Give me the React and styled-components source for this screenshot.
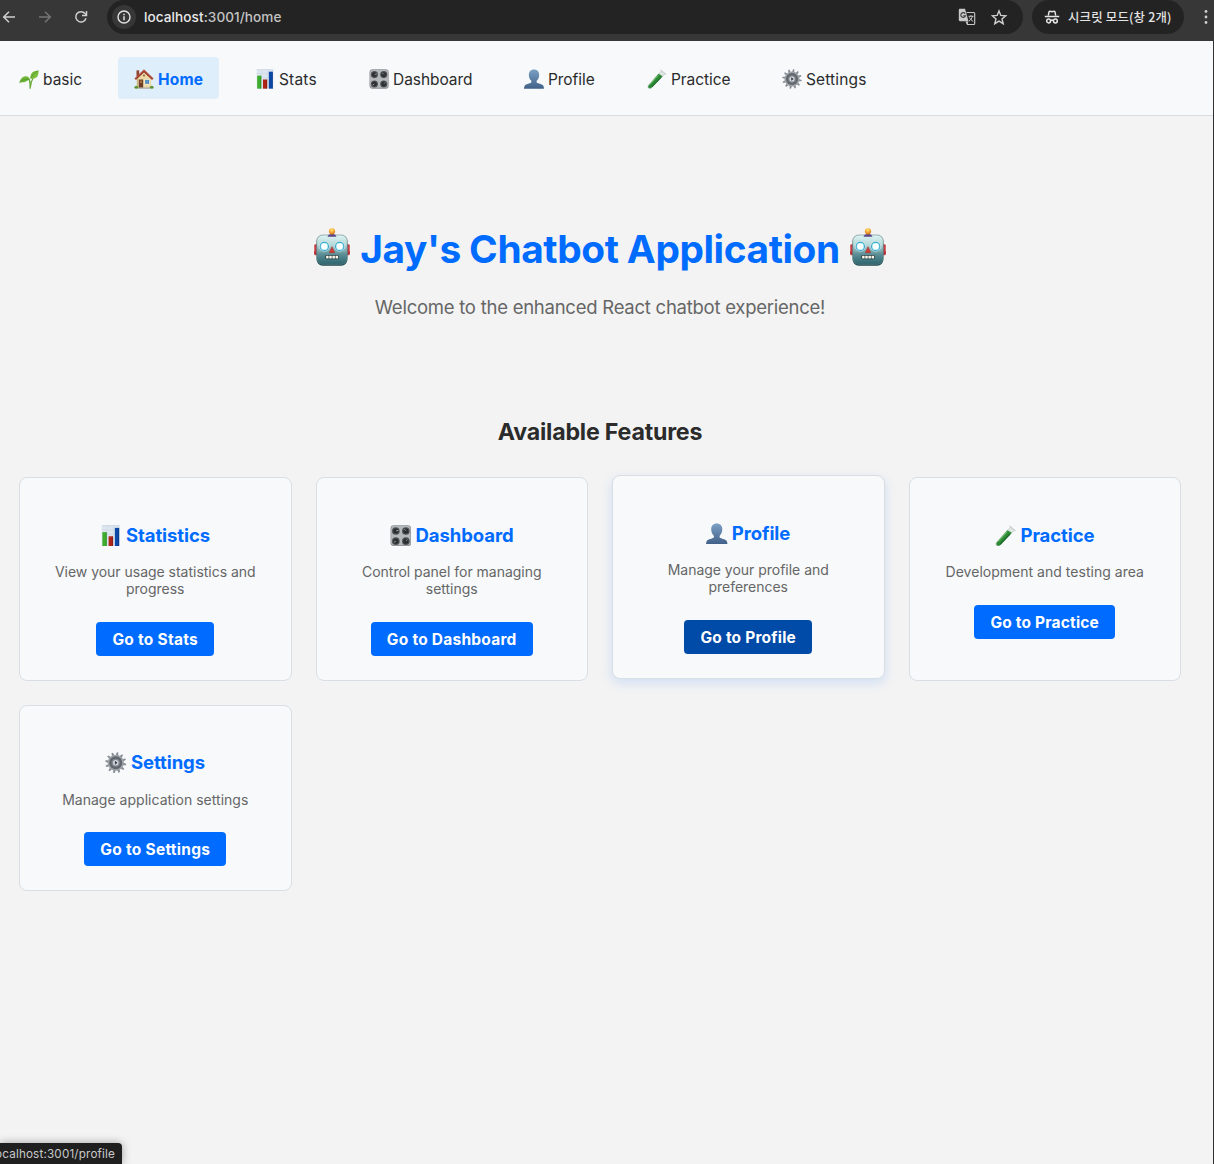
import React from "react";
import styled, { createGlobalStyle } from "styled-components";

const SANS = `Inter, "Noto Sans CJK KR", sans-serif`;

const GlobalStyle = createGlobalStyle`
  *, *::before, *::after { box-sizing: border-box; }
  body { margin: 0; background: #f3f3f3; font-family: ${SANS}; }
  h1, h2, h3, p { margin: 0; }
`;

/* ---------- browser chrome ---------- */

const Page = styled.div`
  position: relative;
  width: 1214px;
  height: 1164px;
  overflow: hidden;
  background: #f3f3f3;
  display: flex;
  flex-direction: column;
`;

const BrowserBar = styled.header`
  flex: none;
  display: flex;
  align-items: center;
  height: 41px;
  padding: 0 0 7px 2px;
  background: #373737;
`;

const HistoryButtons = styled.div`
  display: flex;
  gap: 22px;
  margin-right: 19px;
`;

const AddressBar = styled.div`
  display: flex;
  align-items: center;
  width: 916px;
  height: 34px;
  padding: 0 15px 0 5px;
  border-radius: 17px;
  background: #232323;
`;

const SiteInfo = styled.span`
  display: grid;
  place-items: center;
  width: 24px;
  height: 24px;
  margin-right: 8px;
  border-radius: 50%;
  background: #373737;
`;

const Url = styled.span`
  flex: 1;
  font-size: 13.6px;
  font-weight: 500;
  line-height: 18px;
  letter-spacing: 0.06px;
  color: #c3c3c3;
`;

const UrlHost = styled.span`
  color: #e9e9e9;
`;

const AddressActions = styled.div`
  display: flex;
  align-items: center;
  gap: 15px;
`;

const IncognitoChip = styled.div`
  display: flex;
  align-items: center;
  gap: 8px;
  width: 152px;
  height: 34px;
  margin: 0 15px 0 9px;
  padding-left: 12px;
  border-radius: 17px;
  background: #232323;
  color: #e4e4e4;
  font-family: "Noto Sans CJK KR", sans-serif;
  font-size: 12.4px;
  font-weight: 500;
  line-height: 18px;
  letter-spacing: 0.2px;
  white-space: nowrap;
`;

const Icon = styled.svg`
  display: block;
  flex: none;
  width: ${(p) => p.$w || 14}px;
  height: ${(p) => p.$h || p.$w || 14}px;
  color: ${(p) => p.$color || "#cfcfcf"};
`;

const WindowEdge = styled.div`
  position: absolute;
  top: 41px;
  right: 0;
  bottom: 0;
  width: 1px;
  background: #303030;
`;

const StatusBubble = styled.div`
  position: absolute;
  left: 0;
  bottom: 0;
  display: flex;
  justify-content: flex-end;
  width: 122px;
  height: 21px;
  padding-right: 7px;
  border-top-right-radius: 4px;
  background: #1f1f1f;
  box-shadow: 0 0 8px rgba(0, 0, 0, 0.35);
  color: #c9c9c9;
  font-size: 11.7px;
  line-height: 22.5px;
  letter-spacing: 0.16px;
  white-space: nowrap;
`;

/* ---------- application ---------- */

const NavBar = styled.nav`
  flex: none;
  display: flex;
  align-items: flex-start;
  gap: 20px;
  height: 75px;
  padding: 16px 0 0 3px;
  border-bottom: 1px solid #d9dde1;
  background: #f7f9fb;
`;

const NavItem = styled.a`
  display: flex;
  align-items: center;
  gap: 4px;
  width: ${(p) => p.$width}px;
  height: 42px;
  padding: 2px 0 0 16px;
  border-radius: 4px;
  background: ${(p) => (p.$active ? "#deeefb" : "transparent")};
  color: ${(p) => (p.$active ? "#006bff" : "#2b2b2b")};
  font-size: 15.5px;
  font-weight: ${(p) => (p.$active ? 700 : 400)};
  letter-spacing: ${(p) => p.$track}px;
  line-height: 20px;
  white-space: nowrap;
`;

const NavLabel = styled.span`
  padding-top: 2px;
`;

const Main = styled.main`
  padding: 109px 33px 0 19px;
  text-align: center;
`;

const Title = styled.h1`
  display: flex;
  justify-content: center;
  align-items: center;
  gap: 9px;
  height: 48px;
  color: #006bff;
  font-size: 38.8px;
  font-weight: 700;
  line-height: 48px;
  letter-spacing: -0.4px;
  word-spacing: -0.4px;
`;

const RobotIcon = styled(Icon)`
  margin-bottom: 4px;
`;

const Subtitle = styled.p`
  margin-top: 22px;
  color: #666;
  font-size: 18.5px;
  line-height: 24px;
  letter-spacing: -0.25px;
`;

const SectionTitle = styled.h2`
  margin: 98px 0 30px;
  color: #2b2b2b;
  font-size: 23.2px;
  font-weight: 700;
  line-height: 30px;
  letter-spacing: -0.2px;
`;

const FeatureGrid = styled.section`
  display: grid;
  grid-template-columns: repeat(4, 1fr);
  gap: 24px;
`;

const Card = styled.article`
  display: flex;
  flex-direction: column;
  align-items: center;
  padding: ${(p) => (p.$tight ? 44 : 45)}px 24px 24px;
  border: 1px solid #d9dee4;
  border-radius: 8px;
  background: #f7f9fb;
  transform: ${(p) => (p.$hovered ? "translateY(-2px)" : "none")};
  box-shadow: ${(p) => (p.$hovered ? "0 4px 12px rgba(0, 107, 255, 0.15)" : "none")};
`;

const CardTitle = styled.h3`
  display: flex;
  align-items: center;
  gap: 4px;
  color: #006bff;
  font-size: 18.5px;
  font-weight: 700;
  line-height: 24px;
  letter-spacing: -0.07px;

  svg {
    margin-top: 1px;
  }
`;

const CardText = styled.p`
  margin-top: ${(p) => (p.$tight ? 17 : 16)}px;
  color: #666;
  font-size: 14px;
  line-height: 17px;
  letter-spacing: ${(p) => p.$track || -0.02}px;
`;

const CardButton = styled.button`
  height: 34px;
  margin-top: ${(p) => (p.$tight ? 24 : 25)}px;
  padding: 2px 16px 0;
  border: 0;
  border-radius: 4px;
  background: ${(p) => (p.$hovered ? "#004aa8" : "#006bff")};
  color: #fff;
  font-family: ${SANS};
  font-size: 15.5px;
  font-weight: 700;
  line-height: 32px;
  letter-spacing: ${(p) => p.$track}px;
  white-space: nowrap;
`;

/* ---------- pictograms ---------- */

const Sprout = ({ size }) => (
  <Icon $w={size} viewBox="0 0 24 24">
    <path d="M13.400 23.600c.1-4.200-.1-7.600-1-10.800M13.600 22c.2-4 1-7.600 3.400-11.200" fill="none" stroke="#69a935" strokeWidth="1.600" />
    <path d="M.5 16.800C1.200 12.200 4.200 9 8 8.800c2.800 0 4.600 1.600 5.200 4.200-3.600.2-4.200 2.600-7.200 2.800-2.200 0-3.600 0-5.500 1Z" fill="#6fb536" />
    <path d="M1 16.300c3.200-3.600 7-4.600 11.600-3.600" fill="none" stroke="#4c8a28" strokeWidth=".8" />
    <path d="M13.800 11.800c-.6-4.400 1.200-8 4.600-9.200 2-.6 3.600-.2 5-1.200.4 4-.6 7.600-3.200 9.200-2 1.200-3.600.6-6.400 1.200Z" fill="#78bd3b" />
    <path d="M14.300 11.300c1.600-4.200 4.400-7 8.600-9.300" fill="none" stroke="#4c8a28" strokeWidth=".8" />
  </Icon>
);

const House = ({ size }) => (
  <Icon $w={size} viewBox="0 0 24 24">
    <rect x="3" y="1.600" width="3.200" height="7" fill="#8f4331" />
    <path d="M3.400 11.500 12 3.500l8.600 8V22.500H3.400Z" fill="#ecd9a6" />
    <path d="M3.400 11.500h2v11h-2z" fill="#cdb582" />
    <path d="M12 .6 23.300 11.400l-1.600 1.800L12 4.200l-9.700 9L.7 11.400Z" fill="#9a3a2b" />
    <path d="M12 .6 23.300 11.400l-.6.700L12 2 1.300 12.100l-.6-.7Z" fill="#c25c49" />
    <circle cx="12" cy="7.800" r="1.200" fill="#8a5a35" />
    <rect x="5.800" y="12.600" width="5.200" height="9.900" fill="#6d3f29" />
    <rect x="7" y="13.800" width="2.800" height="3" fill="#a6683f" />
    <rect x="12.700" y="12.300" width="6.200" height="6.300" fill="#fff8e6" />
    <rect x="13.400" y="13" width="4.800" height="4.900" fill="#4483b5" />
    <path d="M15.800 13v4.900" stroke="#c6dbe8" strokeWidth=".5" />
    <rect x="4.600" y="22.200" width="15" height="1.400" fill="#a9a094" />
    <ellipse cx="2.800" cy="22" rx="2.200" ry="1.800" fill="#5d9334" />
    <ellipse cx="21.300" cy="22" rx="2.200" ry="1.800" fill="#5d9334" />
  </Icon>
);

const BarChart = ({ size }) => (
  <Icon $w={size} viewBox="0 0 24 24">
    <path d="M2 .4h20v23.200H2Z" fill="#dde6f0" />
    <path d="M2 5.500h20M2 10.500h20M2 15.500h20M7.700.4v23M15.200.4v23" stroke="#c8d5e3" strokeWidth=".6" />
    <path d="M2 .7h20" stroke="#c4cfdb" strokeWidth=".7" />
    <rect x="2.600" y="8" width="5" height="15.600" fill="#3fae2f" />
    <rect x="9.600" y="12.600" width="5" height="11" fill="#ae2417" />
    <rect x="16.600" y="3.200" width="4.800" height="20.400" fill="#0b48a8" />
    <path d="M7 8v15.600M14 12.600v11M20.800 3.200v20.400" stroke="#000" strokeOpacity=".2" strokeWidth="1" />
  </Icon>
);

const Knobs = ({ size }) => (
  <Icon $w={size} viewBox="0 0 24 24">
    <rect x=".6" y=".4" width="23" height="23.200" rx="3.600" fill="#8b8e91" />
    <rect x="1.300" y="1" width="21.600" height="21.600" rx="3" fill="#b4b8bb" />
    {[[6.500, 6.700], [17.700, 6.700], [6.500, 18], [17.700, 18]].map(([x, y]) => (
      <g key={`${x}-${y}`}>
        <circle cx={x} cy={y} r="4.300" fill="#505356" />
        <circle cx={x} cy={y} r="2.900" fill="#2b2e30" />
      </g>
    ))}
    <path d="M6.800 6.500l2.600-.5M17.800 6.500l-1.800-1.800M6.500 18l-2.100 1.300M17.900 17.700l1.600-1.600" stroke="#b5b9bc" strokeWidth=".9" />
  </Icon>
);

const Person = ({ size }) => (
  <Icon $w={size} viewBox="0 0 24 24">
    <defs>
      <linearGradient id="person" x1="0" y1="0" x2="0" y2="1">
        <stop offset="0" stopColor="#7ba0c6" />
        <stop offset="1" stopColor="#416087" />
      </linearGradient>
    </defs>
    <path
      fill="url(#person)"
      d="M12 .5c3.900 0 6.200 2.600 6.200 6.300 0 2.900-1.100 5.700-2.700 7.100-.5.500-.6 2 .1 2.600 1.200 1 6 1.400 7.400 3.300.7 1 .9 2.500.9 3.900H.1c0-1.400.2-2.900.9-3.900 1.400-1.900 6.200-2.300 7.400-3.300.7-.6.600-2.100.1-2.600-1.600-1.400-2.700-4.200-2.700-7.100C5.800 3.100 8.100.5 12 .5Z"
    />
  </Icon>
);

const TestTube = ({ size }) => (
  <Icon $w={size} viewBox="0 0 24 24">
    <path d="m17.400 2.200 4.200 3.600L6 22.400c-1.200 1.300-3 1.500-4.100.5s-1-2.900.2-4.200Z" fill="#dfe6e3" stroke="#a9b5b0" strokeWidth=".5" />
    <path d="m13.800 5.800 5 2.800L5.700 22.300c-1.100 1.100-2.600 1.300-3.600.4s-.8-2.500.3-3.600Z" fill="#2d8a36" />
    <path d="M13.400 7.700 3.600 18.400" stroke="#86cf7d" strokeWidth="1" strokeLinecap="round" />
    <path d="M16.400 10.600 6 21.300" stroke="#176321" strokeWidth="1.200" strokeLinecap="round" />
    <path d="m16.600 1.400 5.800 4.900" stroke="#c9d1cf" strokeWidth="1.400" strokeLinecap="round" />
  </Icon>
);

const Gear = ({ size }) => (
  <Icon $w={size} viewBox="0 0 24 24">
    {[0, 30, 60, 90, 120, 150].map((a) => (
      <path key={a} d="M11.200.3h1.600l.7 4v15.400l-.7 4h-1.600l-.7-4V4.300Z" fill="#868c93" transform={`rotate(${a + 10} 12 12)`} />
    ))}
    <circle cx="12" cy="12" r="9" fill="#9da3a9" />
    <circle cx="12" cy="12" r="7.300" fill="#62676d" />
    <circle cx="12" cy="12" r="4.600" fill="#82888f" />
    <circle cx="12" cy="12" r="3.100" fill="#d5dae0" />
    <path d="M11.400 10.400 13.600 12l-2.200 1.600Z" fill="#2b3036" stroke="#2b3036" strokeWidth=".6" />
  </Icon>
);

const Robot = () => (
  <RobotIcon $w={38} viewBox="0 0 38 38">
    <defs>
      <linearGradient id="robotHead" x1="0" y1="0" x2="0" y2="1">
        <stop offset="0" stopColor="#dff5f3" />
        <stop offset=".35" stopColor="#b4d7d8" />
        <stop offset=".65" stopColor="#5d9097" />
        <stop offset="1" stopColor="#2d646d" />
      </linearGradient>
      <radialGradient id="robotBall" cx=".45" cy=".3" r=".7">
        <stop offset="0" stopColor="#ffe77a" />
        <stop offset=".6" stopColor="#f3a32c" />
        <stop offset="1" stopColor="#c96a18" />
      </radialGradient>
    </defs>
    <rect x="1" y="16.300" width="5" height="11" rx="1.800" fill="#b8323a" />
    <rect x="32" y="16.300" width="5" height="11" rx="1.800" fill="#b8323a" />
    <path d="M1.700 17.500v6M36.300 17.500v6" stroke="#e27c7a" strokeWidth="1" />
    <rect x="3.700" y="7.300" width="30.600" height="30.400" rx="6" fill="#1c4850" />
    <rect x="3.700" y="7" width="30.600" height="29.300" rx="6" fill="url(#robotHead)" stroke="#69888a" strokeWidth=".6" />
    <path d="M14.600 8.800c0-1.900 1.800-2.900 4.400-2.900s4.400 1 4.400 2.900Z" fill="#5d4585" />
    <circle cx="19" cy="3.300" r="3.100" fill="url(#robotBall)" />
    {[11.300, 26.700].map((x) => (
      <g key={x}>
        <circle cx={x} cy="18.400" r="5.200" fill="#d3eef2" />
        <circle cx={x} cy="18.400" r="4.600" fill="#1f8fb4" />
        <circle cx={x} cy="18.400" r="3.900" fill="#86e4f3" />
        <circle cx={x} cy="18.400" r="3.100" fill="#fff" />
      </g>
    ))}
    <path d="m19 18.800 2.700 5.900h-5.400Z" fill="#d43c33" stroke="#9b2a28" strokeWidth=".5" strokeLinejoin="round" />
    <rect x="12.300" y="27" width="13.400" height="4.200" rx="1.300" fill="#1f3d42" />
    <path d="M13.100 29.100h12" stroke="#fff8ea" strokeWidth="2.800" strokeDasharray="2.500 .65" />
  </RobotIcon>
);

/* ---------- data ---------- */

const NAV = [
  { label: "basic", Pic: Sprout, width: 95, track: 0 },
  { label: "Home", Pic: House, width: 101, track: 0.2, active: true },
  { label: "Stats", Pic: BarChart, width: 94, track: 0.18 },
  { label: "Dashboard", Pic: Knobs, width: 135, track: -0.06 },
  { label: "Profile", Pic: Person, width: 103, track: -0.06 },
  { label: "Practice", Pic: TestTube, width: 115, track: -0.08 },
  { label: "Settings", Pic: Gear, width: 117, track: 0.14 },
];

const FEATURES = [
  { title: "Statistics", Pic: BarChart, text: "View your usage statistics and progress", action: "Go to Stats", track: 0.27 },
  { title: "Dashboard", Pic: Knobs, text: "Control panel for managing settings", action: "Go to Dashboard", track: 0.24 },
  { title: "Profile", Pic: Person, text: "Manage your profile and preferences", action: "Go to Profile", track: 0.2, hovered: true },
  { title: "Practice", Pic: TestTube, text: "Development and testing area", action: "Go to Practice", track: 0.18, textTrack: 0.02 },
  { title: "Settings", Pic: Gear, text: "Manage application settings", action: "Go to Settings", track: 0.27, textTrack: 0.02, tight: true },
];

export default function App() {
  return (
    <Page>
      <GlobalStyle />
      <BrowserBar>
        <HistoryButtons>
          <Icon viewBox="0 0 14 14">
            <path d="M13 7H1.800M7 1.700 1.700 7 7 12.300" fill="none" stroke="currentColor" strokeWidth="1.500" />
          </Icon>
          <Icon viewBox="0 0 14 14" $color="#757575">
            <path d="M1 7h11.200M7 1.700 12.300 7 7 12.300" fill="none" stroke="currentColor" strokeWidth="1.500" />
          </Icon>
          <Icon viewBox="0 0 14 14">
            <path d="M12 8.300A5.200 5.200 0 1 1 11 3.500l1.600 1.700" fill="none" stroke="currentColor" strokeWidth="1.500" />
            <path d="M12.500 1v4.500H8" fill="none" stroke="currentColor" strokeWidth="1.500" />
          </Icon>
        </HistoryButtons>
        <AddressBar>
          <SiteInfo>
            <Icon viewBox="0 0 14 14" $color="#e3e3e3">
              <circle cx="7" cy="7" r="6" fill="none" stroke="currentColor" strokeWidth="1.400" />
              <path d="M7 6.200v4M7 3.700v1.500" stroke="currentColor" strokeWidth="1.500" />
            </Icon>
          </SiteInfo>
          <Url>
            <UrlHost>localhost</UrlHost>:3001/home
          </Url>
          <AddressActions>
            <Icon $w={18} viewBox="0 0 18 18" $color="#c9c9c9">
              <path d="M8.500 4.500h7.200c.6 0 1 .4 1 1v10c0 .600-.4 1-1 1H9.500L8 13.500" fill="none" stroke="currentColor" strokeWidth="1.100" />
              <path d="M2 .8h5l3.500 12.400H2c-.7 0-1.200-.5-1.200-1.200V2C.8 1.300 1.300.8 2 .8Z" fill="currentColor" />
              <path d="M7.200 5.600A2.400 2.400 0 1 0 7.500 7.800H5.300" fill="none" stroke="#3a3a3a" strokeWidth="1.100" />
              <path d="M10.500 8.300h5M13 7.200v1.100M14.500 8.300c-.5 2-1.800 3.600-3.500 4.700M11.500 9.500c.7 1.500 2 2.900 3.700 3.900M9.800 13.300l-.6 3" fill="none" stroke="currentColor" strokeWidth="1" />
            </Icon>
            <Icon $w={17} viewBox="0 0 17 17">
              <path d="m8 1.900 1.800 4.500 4.900.4-3.700 3.100 1.200 4.800L8 12.100l-4.200 2.600L5 9.900 1.300 6.800l4.900-.4Z" fill="none" stroke="currentColor" strokeWidth="1.400" />
            </Icon>
          </AddressActions>
        </AddressBar>
        <IncognitoChip>
          <Icon $w={16} viewBox="0 0 16 16" $color="#e4e4e4">
            <path d="M4.300 6.700 5 3c.1-.6.600-.9 1.200-.7l1.800.4 1.800-.4c.6-.2 1.100.1 1.200.7l.7 3.700" fill="none" stroke="currentColor" strokeWidth="1.500" />
            <path d="M.8 7.400h14.400M6.500 11.700c.9-.7 2.100-.7 3 0" fill="none" stroke="currentColor" strokeWidth="1.500" />
            <circle cx="4.600" cy="12" r="1.900" fill="none" stroke="currentColor" strokeWidth="1.500" />
            <circle cx="11.400" cy="12" r="1.900" fill="none" stroke="currentColor" strokeWidth="1.500" />
          </Icon>
          시크릿 모드(창 2개)
        </IncognitoChip>
        <Icon viewBox="0 0 14 14">
          <circle cx="7" cy="1.500" r="1.400" fill="currentColor" />
          <circle cx="7" cy="7" r="1.400" fill="currentColor" />
          <circle cx="7" cy="12.500" r="1.400" fill="currentColor" />
        </Icon>
      </BrowserBar>

      <NavBar>
        {NAV.map(({ label, Pic, width, track, active }) => (
          <NavItem key={label} $width={width} $track={track} $active={active}>
            <Pic size={20} />
            <NavLabel>{label}</NavLabel>
          </NavItem>
        ))}
      </NavBar>

      <Main>
        <Title>
          <Robot />
          Jay's Chatbot Application
          <Robot />
        </Title>
        <Subtitle>Welcome to the enhanced React chatbot experience!</Subtitle>
        <SectionTitle>Available Features</SectionTitle>
        <FeatureGrid>
          {FEATURES.map(({ title, Pic, text, action, track, textTrack, hovered, tight }) => (
            <Card key={title} $hovered={hovered} $tight={tight}>
              <CardTitle>
                <Pic size={21.5} />
                {title}
              </CardTitle>
              <CardText $track={textTrack} $tight={tight}>{text}</CardText>
              <CardButton $track={track} $hovered={hovered} $tight={tight}>{action}</CardButton>
            </Card>
          ))}
        </FeatureGrid>
      </Main>

      <WindowEdge />
      <StatusBubble>localhost:3001/profile</StatusBubble>
    </Page>
  );
}
